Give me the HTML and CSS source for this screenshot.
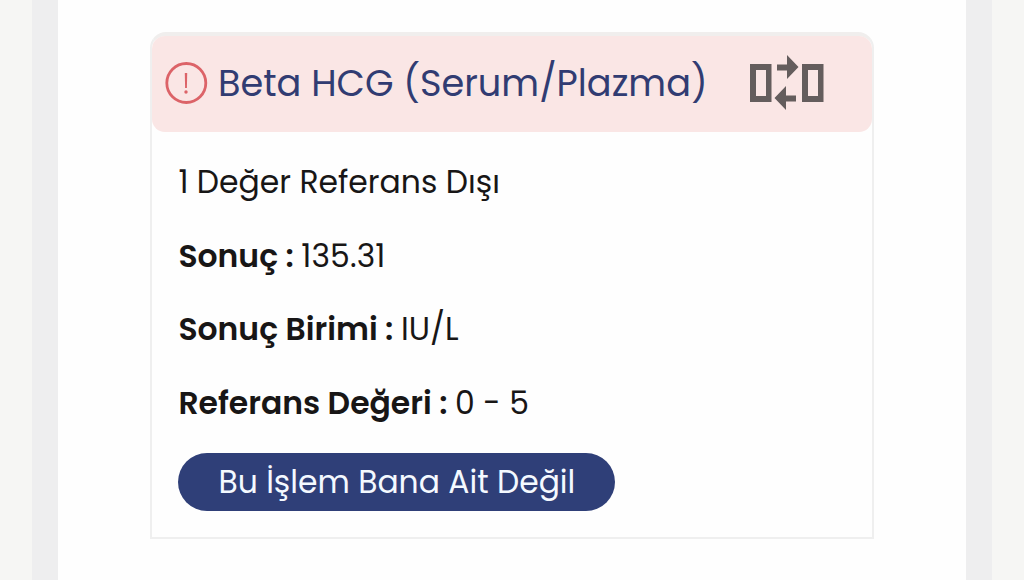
FILE: index.html
```html
<!DOCTYPE html>
<html lang="tr">
<head>
    <meta charset="UTF-8">
    <meta name="viewport" content="width=device-width, initial-scale=1.0">
    <title>Tahlil Sonucu</title>
    <link rel="stylesheet" href="styles.css">
</head>
<body>
    <div class="page">
        <main class="content">
            <div class="card">
                <div class="card-header">
                    <svg class="warning-icon" viewBox="0 0 44 44">
                        <circle cx="22.300" cy="22" r="19.500" fill="none" stroke="#dc6368" stroke-width="2.800"/>
                        <path d="M20.800 12h2.400l-.3 15h-1.800z" fill="#dc6368"/>
                        <circle cx="22" cy="31" r="1.700" fill="#dc6368"/>
                    </svg>
                    <h1 class="card-title">Beta HCG (Serum/Plazma)</h1>
                    <svg class="compare-icon" viewBox="0 0 74 56">
                        <path d="M0 9h21.500v38H0zM6 15v26h10V15zM52 9h21.500v38H52zM58 15v26h10V15z" fill="#645d5d" fill-rule="evenodd"/>
                        <path d="M27 9.500h10V0l11.500 12L37 24v-8.500H27zM46 40.500h-10V31L24.500 43 36 55v-8.500h10z" fill="#645d5d"/>
                    </svg>
                </div>
                <div class="card-body">
                    <p class="row">1 Değer Referans Dışı</p>
                    <p class="row"><b class="label">Sonuç :</b><span class="value"> 135.31</span></p>
                    <p class="row"><b class="label">Sonuç Birimi :</b><span class="value"> IU/L</span></p>
                    <p class="row"><b class="label">Referans Değeri :</b><span class="value"> 0 - 5</span></p>
                    <button class="report-button">Bu İşlem Bana Ait Değil</button>
                </div>
            </div>
        </main>
    </div>
</body>
</html>
```

FILE: styles.css
```css
* {
    box-sizing: border-box;
}

body {
    margin: 0;
    background-color: #f6f6f4;
    color: #181616;
    font-family: Poppins, Inter, sans-serif;
    overflow: hidden;
}

.page {
    width: 960px;
    height: 580px;
    margin-left: 32px;
    padding: 0 26px;
    background-color: #eeeeef;
}

.content {
    height: 100%;
    padding: 32px 92px 0;
    background-color: #fefefe;
}

.card {
    height: 507px;
    border: 2px solid #efefef;
    border-top: 4px solid #f0eeed;
    border-radius: 16px 16px 0 0;
}

.card-header {
    display: flex;
    align-items: center;
    height: 96px;
    padding: 0 12px;
    background-color: #fae6e5;
    border-radius: 13px;
}

.warning-icon {
    width: 44px;
    height: 44px;
    margin-top: -2px;
}

.card-title {
    width: 490px;
    margin: -2px 0 0 10px;
    color: #313c72;
    font-size: 36.7px;
    font-weight: 400;
    line-height: 54px;
    white-space: nowrap;
}

.compare-icon {
    width: 74px;
    height: 56px;
    margin: -3px 0 0 42px;
}

.card-body {
    padding: 13px 26px 0 26.4px;
}

.row {
    height: 73.6px;
    margin: 0;
    font-size: 31.45px;
    line-height: 74px;
    white-space: nowrap;
}

.label {
    font-weight: 600;
}

.value {
    margin-left: -1px;
    letter-spacing: 0.1px;
}

.report-button {
    display: block;
    width: 437px;
    height: 58px;
    margin: 14px 0 0;
    padding: 0;
    border: none;
    border-radius: 29px;
    background-color: #2f3f78;
    color: #f4f9ff;
    font: inherit;
    font-size: 31.4px;
}
```
